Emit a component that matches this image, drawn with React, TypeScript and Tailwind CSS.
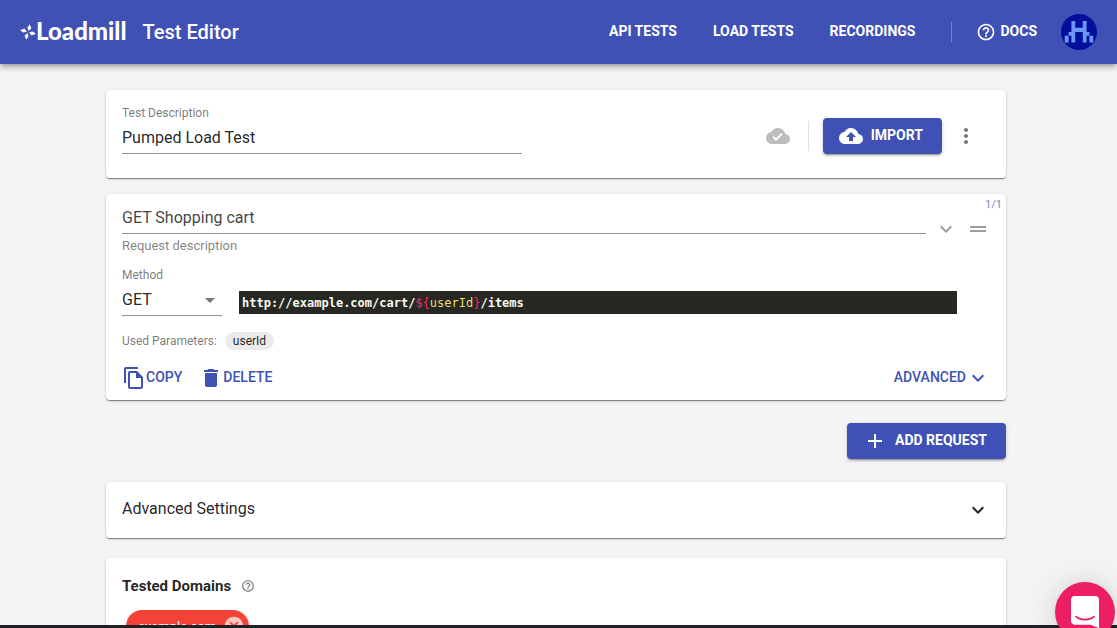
import type { ReactNode } from "react";
import {
  MdAdd,
  MdArrowDropDown,
  MdCancel,
  MdCloudDone,
  MdCloudUpload,
  MdDelete,
  MdDragHandle,
  MdExpandMore,
  MdHelpOutline,
  MdMoreVert,
} from "react-icons/md";

const NAV_LINKS = ["API TESTS", "LOAD TESTS", "RECORDINGS"];

function Card({ className, children }: { className: string; children: ReactNode }) {
  return (
    <section
      className={`rounded bg-white px-4 shadow-[0_1px_3px_rgba(0,0,0,0.2),0_1px_1px_rgba(0,0,0,0.14),0_2px_1px_-1px_rgba(0,0,0,0.3)] ${className}`}
    >
      {children}
    </section>
  );
}

function PrimaryButton({ className, children }: { className: string; children: ReactNode }) {
  return (
    <button
      type="button"
      className={`flex h-9 items-center gap-2 rounded bg-[#3f51b5] pr-[19px] pl-4 text-sm font-bold text-white shadow-[0_3px_1px_-2px_rgba(0,0,0,0.2),0_2px_2px_rgba(0,0,0,0.14),0_1px_5px_rgba(0,0,0,0.12)] ${className}`}
    >
      {children}
    </button>
  );
}

function Pinwheel() {
  return (
    <svg viewBox="0 0 16 16" className="size-4 fill-white" aria-hidden="true">
      <path d="M8.3 7 7.6 3.2 9.8 0.2 11.4 4.4z" />
      <path d="M9 8.3 12.8 7.6 15.8 9.8 11.6 11.4z" />
      <path d="M7.7 9 8.4 12.8 6.2 15.8 4.6 11.6z" />
      <path d="M7 7.7 3.2 8.4 0.2 6.2 4.4 4.6z" />
    </svg>
  );
}

function Avatar() {
  return (
    <svg viewBox="0 0 38 38" className="size-9" aria-hidden="true">
      <circle cx="19" cy="19" r="19" fill="#00109c" />
      <path
        fill="#6d97f5"
        d="M11 7.5h4v7h8v-7h4V19h3v4h-3v7h-4V19h-8v11h-4v-7H8v-4h3zM4 23h4v7H4zM30 23h4v7h-4z"
      />
    </svg>
  );
}

function FileCopyIcon() {
  return (
    <svg viewBox="0 0 24 24" className="size-6 fill-current" aria-hidden="true">
      <path d="M16 1H4c-1.1 0-2 .9-2 2v14h2V3h12V1zm-1 4H8c-1.1 0-1.99.9-1.99 2L6 21c0 1.1.89 2 1.99 2H19c1.1 0 2-.9 2-2V11l-6-6zM8 21V7h6v5h5v9H8z" />
    </svg>
  );
}

function Header() {
  return (
    <header className="relative flex h-16 shrink-0 items-center bg-[#3f51b5] px-5 text-white shadow-[0_2px_4px_-1px_rgba(0,0,0,0.2),0_4px_5px_rgba(0,0,0,0.14),0_1px_10px_rgba(0,0,0,0.12)]">
      <a href="#home" className="flex items-center">
        <Pinwheel />
        <span className="pb-0.5 font-[Lato] text-2xl leading-8 font-black">Loadmill</span>
      </a>
      <h1 className="ml-4 text-xl font-medium">Test Editor</h1>
      <nav className="ml-auto flex items-center gap-9 text-sm font-bold">
        {NAV_LINKS.map((label) => (
          <a key={label} href="#nav" className="pb-0.5">
            {label}
          </a>
        ))}
        <a href="#docs" className="flex h-5 items-center border-l border-white/30 pl-6">
          <MdHelpOutline className="mr-1 size-5" />
          <span className="pb-0.5">DOCS</span>
        </a>
      </nav>
      <button type="button" aria-label="Account" className="ml-6">
        <Avatar />
      </button>
    </header>
  );
}

function DescriptionCard() {
  return (
    <Card className="flex h-22 items-start justify-between pt-4">
      <div className="flex w-[400px] flex-col">
        <label htmlFor="test-description" className="text-xs leading-[14px] text-black/54">
          Test Description
        </label>
        <input
          id="test-description"
          defaultValue="Pumped Load Test"
          className="h-[34px] border-b border-[#949494] pt-0.5 text-base text-black/87 outline-none"
        />
      </div>
      <div className="mt-3 mr-3 flex items-center">
        <MdCloudDone className="size-6 text-[#bdbdbd]" />
        <div className="mr-3.5 ml-[18px] h-[30px] w-px bg-[#e0e0e0]" />
        <PrimaryButton className="">
          <MdCloudUpload className="size-6" />
          <span className="pb-0.5">IMPORT</span>
        </PrimaryButton>
        <button type="button" aria-label="More options" className="ml-3">
          <MdMoreVert className="size-6 text-[#757575]" />
        </button>
      </div>
    </Card>
  );
}

function RequestCard() {
  return (
    <Card className="mt-4 flex h-[206px] flex-col">
      <div className="flex items-start">
        <div className="flex grow flex-col">
          <input
            id="request-description"
            defaultValue="GET Shopping cart"
            className="h-10 border-b border-[#949494] pt-2 text-base text-black/75 outline-none"
          />
          <label
            htmlFor="request-description"
            className="mt-1 text-[13px] leading-4 text-black/50"
          >
            Request description
          </label>
        </div>
        <button type="button" aria-label="Collapse request" className="mt-[23px] ml-2">
          <MdExpandMore className="size-6 text-[#9e9e9e]" />
        </button>
        <div className="ml-2 flex w-6 flex-col pt-[5px]">
          <span className="-mr-3 text-right text-[11px] leading-3 text-[#7986cb]">1/1</span>
          <button type="button" aria-label="Reorder request" className="mt-1.5">
            <MdDragHandle className="size-6 text-[#9e9e9e]" />
          </button>
        </div>
      </div>
      <div className="mt-[13px] flex items-end">
        <div className="flex w-[100px] flex-col">
          <label htmlFor="method" className="text-xs text-black/54">
            Method
          </label>
          <div className="relative flex">
            <select
              id="method"
              defaultValue="GET"
              className="h-[33px] w-full appearance-none border-b border-[#949494] pt-0.5 text-base text-black/87 outline-none"
            >
              <option>GET</option>
              <option>POST</option>
            </select>
            <MdArrowDropDown className="pointer-events-none absolute top-[5px] right-0 size-6 text-[#757575]" />
          </div>
        </div>
        <code className="mr-[33px] mb-0.5 ml-[17px] h-[23px] grow bg-[#272822] pl-[3px] font-['DejaVu_Sans_Mono',monospace] text-xs leading-6 font-bold text-[#f8f8f2]">
          http://example.com/cart/<span className="font-normal text-[#f92672]">{"${"}</span>
          <span className="font-normal text-[#e6db74]">userId</span>
          <span className="font-normal text-[#f92672]">{"}"}</span>/items
        </code>
      </div>
      <div className="mt-4 flex items-center text-xs leading-[18px]">
        <span className="text-black/54">Used Parameters:</span>
        <span className="ml-2 rounded-full bg-[#ebebeb] px-2 text-black/87">userId</span>
      </div>
      <div className="mt-4 flex items-center text-sm font-medium text-[#3f51b5]">
        <button type="button" className="flex items-center">
          <FileCopyIcon />
          <span className="pb-0.5">COPY</span>
        </button>
        <button type="button" className="ml-[17px] flex items-center">
          <MdDelete className="size-6" />
          <span className="pb-0.5">DELETE</span>
        </button>
        <button type="button" className="ml-auto flex items-center">
          <span className="pb-0.5">ADVANCED</span>
          <MdExpandMore className="size-6" />
        </button>
      </div>
    </Card>
  );
}

function ChatLauncher() {
  return (
    <button
      type="button"
      aria-label="Open chat"
      className="fixed right-0.5 -bottom-3.5 flex size-15 items-center justify-center rounded-full bg-[#ec1f64] shadow-[0_1px_6px_rgba(0,0,0,0.06),0_2px_32px_rgba(0,0,0,0.16)]"
    >
      <svg viewBox="0 0 28 32" className="h-8 w-7" aria-hidden="true">
        <path
          fill="#fff"
          d="M28 32s-4.714-1.855-8.527-3.34H3.437C1.54 28.66 0 27.026 0 25.013V3.644C0 1.633 1.54 0 3.437 0h21.125c1.898 0 3.437 1.632 3.437 3.645v18.404H28V32z"
        />
        <path
          d="M5 20.6c5 4 13 4 18 0"
          fill="none"
          stroke="#ec1f64"
          strokeWidth="1.6"
          strokeLinecap="round"
        />
      </svg>
    </button>
  );
}

export default function App() {
  return (
    <div className="flex h-screen flex-col overflow-hidden bg-[#f4f4f4] font-[Roboto,sans-serif]">
      <Header />
      <main className="min-h-0 grow overflow-hidden pt-[26px] pr-[5px]">
        <div className="mx-auto flex max-w-[900px] flex-col">
          <DescriptionCard />
          <RequestCard />
          <PrimaryButton className="mt-[23px] self-end">
            <MdAdd className="size-6" />
            <span className="pb-0.5">ADD REQUEST</span>
          </PrimaryButton>
          <Card className="mt-[23px] flex h-14 items-center justify-between">
            <h2 className="pb-0.5 text-base text-black/87">Advanced Settings</h2>
            <button type="button" aria-label="Expand advanced settings">
              <MdExpandMore className="size-6 text-black/87" />
            </button>
          </Card>
          <Card className="mt-5 h-40 pt-4">
            <div className="flex items-center">
              <h2 className="text-[15px] leading-6 font-bold text-black/87">Tested Domains</h2>
              <MdHelpOutline className="ml-2.5 size-3.5 text-[#757575]" />
            </div>
            <div className="mt-3 ml-1 flex h-8 w-fit items-center rounded-full bg-[#f44336] pr-1 pl-3 text-[13px] text-white">
              <span className="pt-0.5">example.com</span>
              <button type="button" aria-label="Remove example.com" className="ml-[7px]">
                <MdCancel className="size-[22px] text-white/70" />
              </button>
            </div>
          </Card>
        </div>
      </main>
      <footer className="h-[3px] shrink-0 bg-[#1f2124]" />
      <ChatLauncher />
    </div>
  );
}
